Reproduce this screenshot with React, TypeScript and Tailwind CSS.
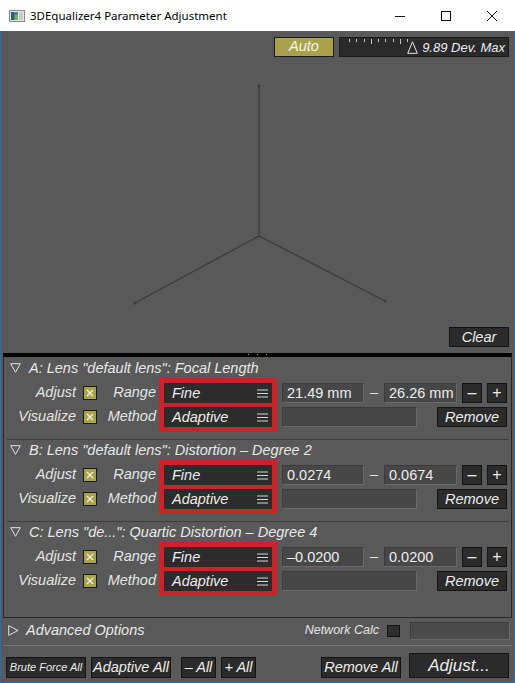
import React from "react";

const F = "font-['Liberation_Sans',Arial,sans-serif]";

function Check() {
  return (
    <div className="w-[14px] h-[14px] bg-[#a9a24a] border border-[#1a1a1a] flex items-center justify-center">
      <svg width="10" height="10" viewBox="0 0 10 10">
        <path d="M2 2L8 8M8 2L2 8" stroke="#f2f2e8" strokeWidth="1.3" />
      </svg>
    </div>
  );
}

function Menu() {
  return (
    <svg width="11" height="9" viewBox="0 0 11 9">
      <path d="M0 1H11M0 4.5H11M0 8H11" stroke="#d8d8d8" strokeWidth="1" />
    </svg>
  );
}

function Drop({ label }: { label: string }) {
  return (
    <div className="h-[20px] bg-[#2c2c2c] flex items-center justify-between pl-[8px] pr-[4px]">
      <span className="italic text-[14.5px] text-[#ececec] leading-none">{label}</span>
      <Menu />
    </div>
  );
}

function Field({ w, text }: { w: string; text?: string }) {
  return (
    <div className={`${w} h-[20px] bg-[#474747] border border-[#6a6a6a] border-t-[#3c3c3c] border-l-[#3c3c3c] flex items-center pl-[4px] text-[14.5px] text-[#ececec] leading-none`}>
      {text}
    </div>
  );
}

function Btn({ w, children, cls = "" }: { w: string; children: React.ReactNode; cls?: string }) {
  return (
    <div className={`${w} h-[20px] bg-[#2b2b2b] border border-[#141414] flex items-center justify-center italic text-[#ececec] leading-none ${cls}`}>
      {children}
    </div>
  );
}

function DownTri() {
  return (
    <svg width="11" height="10" viewBox="0 0 11 10">
      <path d="M0.7 0.7H10.3L5.5 9.3Z" fill="none" stroke="#e0e0e0" strokeWidth="1" />
    </svg>
  );
}

function Section({ title, lo, hi }: { title: string; lo: string; hi: string }) {
  return (
    <div className="flex flex-col">
      <div className="h-[20px] flex items-center pl-[6px] gap-[8px]">
        <DownTri />
        <span className="italic text-[14.5px] text-[#e8e8e8] leading-none">{title}</span>
      </div>
      <div className="flex h-[54px]">
        <div className="w-[72px] flex flex-col pt-[5px] gap-[4px] items-end italic text-[14.5px] text-[#e4e4e4]">
          <div className="h-[20px] flex items-center">Adjust</div>
          <div className="h-[20px] flex items-center">Visualize</div>
        </div>
        <div className="w-[21px] flex flex-col pt-[5px] gap-[4px] items-end">
          <div className="h-[20px] flex items-center"><Check /></div>
          <div className="h-[20px] flex items-center"><Check /></div>
        </div>
        <div className="w-[59px] flex flex-col pt-[5px] gap-[4px] items-end italic text-[14.5px] text-[#e4e4e4]">
          <div className="h-[20px] flex items-center">Range</div>
          <div className="h-[20px] flex items-center">Method</div>
        </div>
        <div className="ml-[3px] w-[118px] h-[54px] bg-[#c8242c] p-[5px] flex flex-col gap-[4px]">
          <Drop label="Fine" />
          <Drop label="Adaptive" />
        </div>
        <div className="ml-[5px] flex flex-col pt-[5px] gap-[4px]">
          <div className="flex items-center h-[20px]">
            <Field w="w-[82px]" text={lo} />
            <div className="w-[20px] text-center text-[14.5px] text-[#e4e4e4]">–</div>
            <Field w="w-[73px]" text={hi} />
            <Btn w="w-[20px] ml-[5px]" cls="not-italic text-[16px]">–</Btn>
            <Btn w="w-[20px] ml-[5px]" cls="not-italic text-[16px]">+</Btn>
          </div>
          <div className="flex items-center h-[20px]">
            <Field w="w-[135px]" />
            <Btn w="w-[70px] ml-[20px]" cls="text-[14.5px]">Remove</Btn>
          </div>
        </div>
      </div>
      <div className="h-[7px]" />
    </div>
  );
}

export default function App() {
  const ticks = [9, 16, 24, 31, 38, 45, 53, 60, 67];
  return (
    <div className={`w-[515px] h-[683px] flex flex-col ${F} select-none`}>
      {/* Title bar */}
      <div className="h-[31px] bg-white flex items-center shrink-0">
        <div className="pl-[9px] flex items-center gap-[5px]">
          <svg width="16" height="12" viewBox="0 0 16 12">
            <rect x="0.5" y="0.5" width="15" height="11" fill="#e6e6e6" stroke="#8a8a8a" />
            <rect x="2" y="2" width="7" height="8" fill="#4b8a7a" />
            <rect x="2" y="2" width="3" height="8" fill="#2f5f78" />
            <rect x="6" y="5" width="3" height="5" fill="#6cb45a" />
            <rect x="10" y="2" width="4" height="8" fill="#c9c9c9" />
          </svg>
          <span className="font-['Noto_Sans',sans-serif] text-[11.5px] text-black">3DEqualizer4 Parameter Adjustment</span>
        </div>
        <div className="ml-auto flex h-full">
          <div className="w-[46px] h-full flex items-center justify-center">
            <svg width="10" height="10" viewBox="0 0 10 10"><path d="M0 5.5H10" stroke="#111" strokeWidth="1" /></svg>
          </div>
          <div className="w-[46px] h-full flex items-center justify-center">
            <svg width="10" height="10" viewBox="0 0 10 10"><rect x="0.5" y="0.5" width="9" height="9" fill="none" stroke="#111" strokeWidth="1" /></svg>
          </div>
          <div className="w-[46px] h-full flex items-center justify-center">
            <svg width="10" height="10" viewBox="0 0 10 10"><path d="M0 0L10 10M10 0L0 10" stroke="#111" strokeWidth="1" /></svg>
          </div>
        </div>
      </div>

      {/* Content */}
      <div className="flex-1 flex flex-col bg-[#595959] border-x border-b border-[#2f6ca4]">
        {/* Viewport */}
        <div className="relative h-[322px] flex flex-col justify-between pt-[6px] pb-[6px] pr-[5px] shrink-0">
          <svg className="absolute left-0 top-0" width="513" height="322" viewBox="0 0 513 322">
            <g stroke="#3b3b3b" strokeWidth="1.3" fill="none">
              <path d="M258 55V205L134 272M258 205L384 270" />
            </g>
            <g fill="#3b3b3b">
              <circle cx="258" cy="55" r="1.5" />
              <circle cx="134" cy="272" r="1.5" />
              <circle cx="384" cy="270" r="1.5" />
            </g>
          </svg>
          <div className="relative flex justify-end gap-[5px]">
            <div className="w-[60px] h-[20px] bg-[#a9a24a] border border-[#1a1a1a] flex items-center justify-center italic text-[14.5px] text-[#f4f4ec]">
              Auto
            </div>
            <div className="relative w-[170px] h-[20px] bg-[#2a2a2a] border border-[#1a1a1a] flex items-center justify-end pr-[3px] gap-[4px]">
              <svg className="absolute left-0 top-0" width="80" height="8" viewBox="0 0 80 8">
                {ticks.map((x, i) => (
                  <path key={x} d={`M${x + 0.5} 1V${i % 4 === 3 ? 6 : 4}`} stroke="#c8c8c8" strokeWidth="1" />
                ))}
              </svg>
              <svg width="11" height="13" viewBox="0 0 11 13">
                <path d="M5.5 0.8L10.3 12.3H0.7Z" fill="none" stroke="#e8e8e8" strokeWidth="1" />
              </svg>
              <span className="italic text-[13px] text-[#ececec] leading-none">9.89 Dev. Max</span>
            </div>
          </div>
          <div className="relative flex justify-end">
            <Btn w="w-[60px]" cls="text-[14.5px]">Clear</Btn>
          </div>
        </div>

        {/* Panel */}
        <div className="relative mx-[2px] h-[265px] shrink-0 border-x border-b border-[#262626] border-t-[4px] border-t-black flex flex-col pt-[1px]">
          <div className="absolute -top-[3px] left-[244px] flex gap-[8px]">
            <div className="w-[1px] h-[1px] bg-[#9a9a9a]" />
            <div className="w-[1px] h-[1px] bg-[#9a9a9a]" />
            <div className="w-[1px] h-[1px] bg-[#9a9a9a]" />
          </div>
          <Section title={'A: Lens "default lens": Focal Length'} lo="21.49 mm" hi="26.26 mm" />
          <div className="mx-[3px] border-t border-[#3d3d3d]" />
          <Section title={'B: Lens "default lens": Distortion – Degree 2'} lo="0.0274" hi="0.0674" />
          <div className="mx-[3px] border-t border-[#3d3d3d]" />
          <Section title={'C: Lens "de...": Quartic Distortion – Degree 4'} lo="–0.0200" hi="0.0200" />
        </div>

        {/* Advanced row */}
        <div className="h-[27px] flex items-center pl-[7px] pr-[4px] pb-[2px] shrink-0">
          <svg width="11" height="11" viewBox="0 0 11 11">
            <path d="M0.7 0.7L10 5.5L0.7 10.3Z" fill="none" stroke="#e0e0e0" strokeWidth="1" />
          </svg>
          <span className="ml-[7px] italic text-[14.5px] text-[#e8e8e8] leading-none">Advanced Options</span>
          <span className="ml-auto italic text-[12.5px] text-[#e4e4e4] leading-none">Network Calc</span>
          <div className="ml-[8px] w-[13px] h-[12px] bg-[#2e2e2e] border border-[#141414]" />
          <div className="ml-[10px] w-[100px] h-[18px] bg-[#4a4a4a] border border-[#6a6a6a] border-t-[#3c3c3c] border-l-[#3c3c3c]" />
        </div>
        <div className="mx-[2px] border-t border-[#747474] shrink-0" />

        {/* Bottom buttons */}
        <div className="flex-1 flex items-end pb-[4px] pl-[5px]">
          <Btn w="w-[80px] h-[21px]" cls="text-[11px]">Brute Force All</Btn>
          <Btn w="w-[80px] h-[21px] ml-[5px]" cls="text-[14.5px]">Adaptive All</Btn>
          <Btn w="w-[35px] h-[21px] ml-[10px]" cls="text-[14.5px]">– All</Btn>
          <Btn w="w-[35px] h-[21px] ml-[5px]" cls="text-[14.5px]">+ All</Btn>
          <Btn w="w-[80px] h-[21px] ml-[65px]" cls="text-[14.5px]">Remove All</Btn>
          <div className="ml-[8px] w-[100px] h-[25px] bg-[#2b2b2b] border border-[#141414] flex items-center justify-center italic text-[17px] text-[#ececec] leading-none">
            Adjust...
          </div>
        </div>
      </div>
    </div>
  );
}
